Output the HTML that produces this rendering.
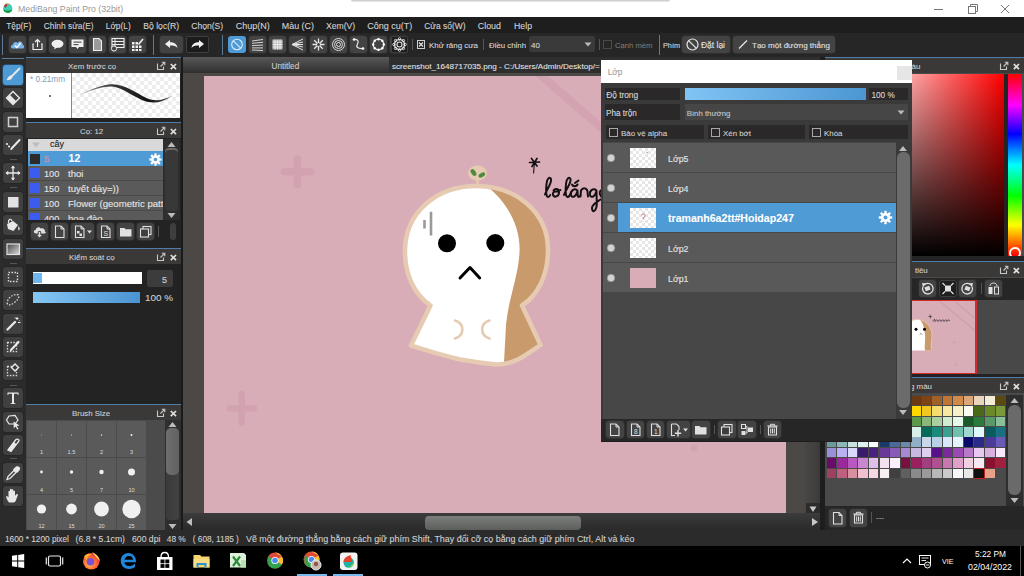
<!DOCTYPE html><html><head><meta charset="utf-8"><style>
*{margin:0;padding:0;box-sizing:border-box}
html,body{width:1024px;height:576px;overflow:hidden;background:#2a2a2a;font-family:"Liberation Sans",sans-serif}
div{position:absolute}
.t{white-space:nowrap;line-height:1;-webkit-text-stroke:0.1px currentColor}
.btn{background:#434343;border-radius:3px;box-shadow:0 0 0 1px #2e2e2e}
</style></head><body>
<div style="left:0px;top:0px;width:1024px;height:17px;background:#ffffff"></div>
<div style="left:351px;top:0px;width:319px;height:2px;background:linear-gradient(#c8c8c8,#eeeeee);border-radius:0 0 3px 3px"></div>
<svg style="position:absolute;left:0;top:0" width="16" height="17" viewBox="0 0 16 17"><circle cx="7.8" cy="8.2" r="4.6" fill="#3ccfb8"/><path d="M3.3 9 A4.6 4.6 0 0 0 12.3 9.5 C10 11 6 11 3.3 9Z" fill="#1a9a3a"/><path d="M4 6.5 C4.5 4 6.5 3.5 8 4 C7 5.5 6.5 7 5.5 8 Z" fill="#c8303a"/><path d="M6.5 3.8 C8 3.2 9 3.6 9.5 4.2 L7.5 5Z" fill="#f0a040"/></svg>
<div class="t" style="left:18px;top:5.00px;font-size:8.75px;color:#999999;-webkit-text-stroke:0">MediBang Paint Pro (32bit)</div>
<svg style="position:absolute;left:930px;top:3px" width="90" height="12" viewBox="0 0 90 12"><line x1="4" y1="6.5" x2="13" y2="6.5" stroke="#777" stroke-width="1"/><rect x="38.5" y="3.5" width="7" height="7" fill="none" stroke="#777"/><path d="M40.5 3.5 V1.5 H47.5 V8.5 H45.5" fill="none" stroke="#777"/><path d="M71 2 L79 10 M79 2 L71 10" stroke="#777" stroke-width="1"/></svg>
<div style="left:0px;top:17px;width:1024px;height:16px;background:#1e1e1e"></div>
<div class="t" style="left:6.25px;top:22.00px;font-size:8.33px;color:#d2d2d2;">Tệp(F)</div>
<div class="t" style="left:43.75px;top:22.00px;font-size:8.4px;color:#d2d2d2;">Chỉnh sửa(E)</div>
<div class="t" style="left:105.75px;top:22.00px;font-size:8.36px;color:#d2d2d2;">Lớp(L)</div>
<div class="t" style="left:143.25px;top:22.00px;font-size:8.64px;color:#d2d2d2;">Bộ lọc(R)</div>
<div class="t" style="left:191.25px;top:22.00px;font-size:8.59px;color:#d2d2d2;">Chọn(S)</div>
<div class="t" style="left:235.75px;top:22.00px;font-size:9.0px;color:#d2d2d2;">Chụp(N)</div>
<div class="t" style="left:281.75px;top:22.00px;font-size:8.93px;color:#d2d2d2;">Màu (C)</div>
<div class="t" style="left:326px;top:22.00px;font-size:8.63px;color:#d2d2d2;">Xem(V)</div>
<div class="t" style="left:367.25px;top:22.00px;font-size:9.0px;color:#d2d2d2;">Công cụ(T)</div>
<div class="t" style="left:424.25px;top:22.00px;font-size:8.43px;color:#d2d2d2;">Cửa sổ(W)</div>
<div class="t" style="left:477.75px;top:22.00px;font-size:8.9px;color:#d2d2d2;">Cloud</div>
<div class="t" style="left:514px;top:22.00px;font-size:8.75px;color:#d2d2d2;">Help</div>
<div style="left:0px;top:33px;width:1024px;height:24px;background:#262626"></div>
<div style="left:2px;top:35px;width:1px;height:20px;background:#5a7a98"></div>
<div class="btn" style="left:9px;top:36px;width:17px;height:17px;"></div>
<div class="btn" style="left:29px;top:36px;width:17px;height:17px;"></div>
<div class="btn" style="left:49px;top:36px;width:17px;height:17px;"></div>
<div class="btn" style="left:69px;top:36px;width:17px;height:17px;"></div>
<div class="btn" style="left:89px;top:36px;width:17px;height:17px;"></div>
<div class="btn" style="left:109px;top:36px;width:17px;height:17px;"></div>
<div class="btn" style="left:129px;top:36px;width:17px;height:17px;"></div>
<svg style="position:absolute;left:9px;top:36px" width="17" height="17" viewBox="0 0 17 17"><path d="M3.5 12.5 C1.5 12.5 1.5 9 3.8 8.8 C4 6 7.5 5 8.8 7 C10 4.5 14 5.5 13.6 8.7 C15.8 9 15.6 12.5 13.5 12.5Z" fill="#78b4ea"/><path d="M5.8 9.6 L7.8 11.4 L11.6 7.2" fill="none" stroke="#fff" stroke-width="1.4"/></svg>
<svg style="position:absolute;left:29px;top:36px" width="17" height="17" viewBox="0 0 17 17"><path d="M5 8 H4 V13.5 H13 V8 H12" fill="none" stroke="#f0f0f0" stroke-width="1.2"/><path d="M8.5 11 V3.5 M6 6 L8.5 3.5 L11 6" fill="none" stroke="#f0f0f0" stroke-width="1.2"/></svg>
<svg style="position:absolute;left:49px;top:36px" width="17" height="17" viewBox="0 0 17 17"><ellipse cx="8.5" cy="7.8" rx="6" ry="4" fill="#f0f0f0"/><path d="M6 10.5 L5 13.5 L9 11Z" fill="#f0f0f0"/></svg>
<svg style="position:absolute;left:69px;top:36px" width="17" height="17" viewBox="0 0 17 17"><path d="M2.5 3.5 H14.5 V11 H10 L8.5 13 L7 11 H2.5Z" fill="#f0f0f0"/><rect x="4.5" y="5.5" width="8" height="1.2" fill="#555"/><rect x="4.5" y="8" width="5" height="1.2" fill="#555"/></svg>
<svg style="position:absolute;left:89px;top:36px" width="17" height="17" viewBox="0 0 17 17"><path d="M4.5 2.5 H10 L12.5 5 V14.5 H4.5Z" fill="#9a9a9a" stroke="#f0f0f0" stroke-width="1.1"/></svg>
<svg style="position:absolute;left:109px;top:36px" width="17" height="17" viewBox="0 0 17 17"><rect x="3" y="2.5" width="12" height="9" fill="none" stroke="#f0f0f0" stroke-width="1.1"/><path d="M3 5.5 H15 M3 8.5 H15 M6 2.5 V11.5" stroke="#f0f0f0" stroke-width="1"/><circle cx="5" cy="12.5" r="2.6" fill="#444" stroke="#f0f0f0" stroke-width="1"/></svg>
<svg style="position:absolute;left:129px;top:36px" width="17" height="17" viewBox="0 0 17 17"><g fill="#f0f0f0"><rect x="3" y="6" width="2.5" height="2.5"/><rect x="6.5" y="6" width="2.5" height="2.5"/><rect x="3" y="9.5" width="2.5" height="2.5"/><rect x="6.5" y="9.5" width="2.5" height="2.5"/><rect x="10" y="9.5" width="2.5" height="2.5"/><rect x="3" y="13" width="2.5" height="2"/><rect x="6.5" y="13" width="2.5" height="2"/><rect x="10" y="13" width="2.5" height="2"/></g><path d="M9.5 8.5 L14 3" stroke="#f0f0f0" stroke-width="1.6"/></svg>
<div style="left:153px;top:35px;width:1px;height:20px;background:#5a7a98"></div>
<div class="btn" style="left:160px;top:36px;width:23px;height:17px;"></div>
<svg style="position:absolute;left:160px;top:36px" width="23" height="17" viewBox="0 0 23 17"><path d="M5 8 L10 4 V6.3 C14 6.3 17 8 17.5 12 C16 10 14 9.6 10 9.6 V12Z" fill="#f0f0f0"/></svg>
<div style="left:186px;top:36px;width:23px;height:17px;background:#1c1c1c;border:1px solid #3e3e3e;border-radius:2px"></div>
<svg style="position:absolute;left:186px;top:36px" width="23" height="17" viewBox="0 0 23 17"><path d="M18 8 L13 4 V6.3 C9 6.3 6 8 5.5 12 C7 10 9 9.6 13 9.6 V12Z" fill="#f0f0f0"/></svg>
<div style="left:222px;top:35px;width:1px;height:20px;background:#5a7a98"></div>
<div style="left:228px;top:36px;width:18px;height:17px;background:#4e9ad4;border-radius:3px"></div>
<svg style="position:absolute;left:228px;top:36px" width="18" height="17" viewBox="0 0 18 17"><circle cx="9" cy="8.5" r="5.3" fill="none" stroke="#d8ecfa" stroke-width="1.1"/><path d="M5.3 4.8 L12.7 12.2" stroke="#d8ecfa" stroke-width="1.1"/></svg>
<div class="btn" style="left:249px;top:36px;width:17px;height:17px;"></div>
<div class="btn" style="left:269px;top:36px;width:17px;height:17px;"></div>
<div class="btn" style="left:289px;top:36px;width:17px;height:17px;"></div>
<div class="btn" style="left:310px;top:36px;width:17px;height:17px;"></div>
<div class="btn" style="left:330px;top:36px;width:17px;height:17px;"></div>
<div class="btn" style="left:350px;top:36px;width:17px;height:17px;"></div>
<div class="btn" style="left:370px;top:36px;width:17px;height:17px;"></div>
<div class="btn" style="left:390px;top:36px;width:17px;height:17px;"></div>
<svg style="position:absolute;left:249px;top:36px" width="17" height="17" viewBox="0 0 17 17"><path d="M3 5 L14 3.5 M3 7.3 L14 6.3 M3 9.6 L14 9.1 M3 11.9 L14 11.9 M3 14 L14 14.5" stroke="#e8e8e8" stroke-width="0.9"/></svg>
<svg style="position:absolute;left:269px;top:36px" width="17" height="17" viewBox="0 0 17 17"><rect x="3.5" y="3.5" width="10" height="10" fill="#bbb"/><path d="M3.5 6 H13.5 M3.5 8.5 H13.5 M3.5 11 H13.5 M6 3.5 V13.5 M8.5 3.5 V13.5 M11 3.5 V13.5" stroke="#eee" stroke-width="0.8"/></svg>
<svg style="position:absolute;left:289px;top:36px" width="17" height="17" viewBox="0 0 17 17"><path d="M14 3 L3 8.5 L14 14 M14 6 L3 8.5 L14 11 M14 8.5 H3" fill="none" stroke="#e8e8e8" stroke-width="1"/></svg>
<svg style="position:absolute;left:310px;top:36px" width="17" height="17" viewBox="0 0 17 17"><path d="M8.5 2.5 V14.5 M2.5 8.5 H14.5 M4.2 4.2 L12.8 12.8 M12.8 4.2 L4.2 12.8" stroke="#e8e8e8" stroke-width="1.3"/><circle cx="8.5" cy="8.5" r="1.5" fill="#3e3e3e"/></svg>
<svg style="position:absolute;left:330px;top:36px" width="17" height="17" viewBox="0 0 17 17"><g fill="none" stroke="#e8e8e8" stroke-width="0.9"><circle cx="8.5" cy="8.5" r="6"/><circle cx="8.5" cy="8.5" r="4"/><circle cx="8.5" cy="8.5" r="2"/></g></svg>
<svg style="position:absolute;left:350px;top:36px" width="17" height="17" viewBox="0 0 17 17"><path d="M4 3.5 C7 3 9.5 5 7.5 8 C5.5 11 8 13 13 12.5" fill="none" stroke="#e8e8e8" stroke-width="1.2"/><circle cx="4" cy="3.5" r="1.3" fill="#fff"/><circle cx="13" cy="12.5" r="1.3" fill="#fff"/></svg>
<svg style="position:absolute;left:370px;top:36px" width="17" height="17" viewBox="0 0 17 17"><circle cx="8.5" cy="8.5" r="5.3" fill="none" stroke="#e8e8e8" stroke-width="1.3"/><circle cx="13.80" cy="8.50" r="1.2" fill="#fff"/><circle cx="12.25" cy="12.25" r="1.2" fill="#fff"/><circle cx="8.50" cy="13.80" r="1.2" fill="#fff"/><circle cx="4.75" cy="12.25" r="1.2" fill="#fff"/><circle cx="3.20" cy="8.50" r="1.2" fill="#fff"/><circle cx="4.75" cy="4.75" r="1.2" fill="#fff"/><circle cx="8.50" cy="3.20" r="1.2" fill="#fff"/><circle cx="12.25" cy="4.75" r="1.2" fill="#fff"/></svg>
<div style="left:391px;top:36px;width:17px;height:17px;background:#1c1c1c;border:1px solid #3e3e3e;border-radius:2px"></div>
<svg style="position:absolute;left:391px;top:36px" width="17" height="17" viewBox="0 0 17 17"><circle cx="8.5" cy="8.5" r="5" fill="none" stroke="#e8e8e8" stroke-width="1.1"/><circle cx="8.5" cy="8.5" r="2.5" fill="none" stroke="#e8e8e8" stroke-width="1.1"/><circle cx="14.00" cy="8.50" r="1.3" fill="none" stroke="#e8e8e8" stroke-width="0.9"/><circle cx="12.39" cy="12.39" r="1.3" fill="none" stroke="#e8e8e8" stroke-width="0.9"/><circle cx="8.50" cy="14.00" r="1.3" fill="none" stroke="#e8e8e8" stroke-width="0.9"/><circle cx="4.61" cy="12.39" r="1.3" fill="none" stroke="#e8e8e8" stroke-width="0.9"/><circle cx="3.00" cy="8.50" r="1.3" fill="none" stroke="#e8e8e8" stroke-width="0.9"/><circle cx="4.61" cy="4.61" r="1.3" fill="none" stroke="#e8e8e8" stroke-width="0.9"/><circle cx="8.50" cy="3.00" r="1.3" fill="none" stroke="#e8e8e8" stroke-width="0.9"/><circle cx="12.39" cy="4.61" r="1.3" fill="none" stroke="#e8e8e8" stroke-width="0.9"/></svg>
<div style="left:412px;top:39px;width:1px;height:11px;background:#555"></div>
<div style="left:417px;top:40px;width:8px;height:9px;border:1px solid #cfcfcf"></div>
<svg style="position:absolute;left:417px;top:40px" width="8" height="9" viewBox="0 0 8 9"><path d="M2 2.5 L6 6.5 M6 2.5 L2 6.5" stroke="#e0e0e0" stroke-width="1.2"/></svg>
<div class="t" style="left:429px;top:42.00px;font-size:7.94px;color:#d8d8d8;">Khử răng cưa</div>
<div style="left:483px;top:39px;width:1px;height:11px;background:#555"></div>
<div class="t" style="left:489px;top:42.00px;font-size:7.83px;color:#d8d8d8;">Điều chỉnh</div>
<div style="left:529px;top:36px;width:66px;height:16px;background:#3a3a3a;border-radius:2px"></div>
<div class="t" style="left:531px;top:42.00px;font-size:8px;color:#d8d8d8;">40</div>
<svg style="position:absolute;left:584px;top:42px" width="8" height="5" viewBox="0 0 8 5"><path d="M0.5 0.5 L7.5 0.5 L4 4.5Z" fill="#bbb"/></svg>
<div style="left:599px;top:39px;width:1px;height:11px;background:#555"></div>
<div style="left:603px;top:40px;width:9px;height:9px;border:1px solid #4a4a4a"></div>
<div class="t" style="left:615px;top:42.00px;font-size:7.67px;color:#777777;">Cạnh mềm</div>
<div style="left:659px;top:35px;width:1px;height:20px;background:#5a7a98"></div>
<div class="t" style="left:663px;top:42.00px;font-size:7.28px;color:#d8d8d8;">Phím</div>
<div class="btn" style="left:682px;top:36px;width:48px;height:17px;"></div>
<svg style="position:absolute;left:685px;top:37px" width="15" height="15" viewBox="0 0 15 15"><circle cx="7.5" cy="7.5" r="5.5" fill="none" stroke="#e8e8e8" stroke-width="1.2"/><path d="M3.6 3.6 L11.4 11.4" stroke="#e8e8e8" stroke-width="1.2"/></svg>
<div class="t" style="left:701px;top:41.00px;font-size:8.47px;color:#e0e0e0;">Đặt lại</div>
<div class="btn" style="left:733px;top:36px;width:102px;height:17px;"></div>
<svg style="position:absolute;left:737px;top:38px" width="12" height="12" viewBox="0 0 12 12"><path d="M2 10.5 L10 2.5" stroke="#e8e8e8" stroke-width="1.3"/></svg>
<div class="t" style="left:752px;top:42.00px;font-size:8.03px;color:#e0e0e0;">Tạo một đường thẳng</div>
<div style="left:0px;top:57px;width:26px;height:474px;background:#2b2b2b"></div>
<div style="left:2px;top:58px;width:22px;height:1px;background:#5a7a98"></div>
<div style="left:10px;top:159px;width:7px;height:1px;background:#555"></div>
<div style="left:10px;top:187px;width:7px;height:1px;background:#555"></div>
<div style="left:10px;top:263px;width:7px;height:1px;background:#555"></div>
<div style="left:10px;top:385px;width:7px;height:1px;background:#555"></div>
<div style="left:10px;top:458px;width:7px;height:1px;background:#555"></div>
<div style="left:3px;top:65px;width:20px;height:20px;background:#4e9ad4;border-radius:3px;box-shadow:0 0 0 1px #2a4a6a"></div>
<svg style="position:absolute;left:3px;top:65px" width="20" height="20" viewBox="0 0 20 20"><path d="M16.5 3.5 L8.5 11.5" stroke="#e8e8e8" stroke-width="1.8" stroke-linecap="round"/><path d="M8 10.5 C5.5 10.5 5 13 3.5 15 C6 15.5 9.5 14.5 9.5 12Z" fill="#e8e8e8"/></svg>
<div style="left:3px;top:88px;width:20px;height:20px;background:#404040;border-radius:3px;box-shadow:0 0 0 1px #262626"></div>
<svg style="position:absolute;left:3px;top:88px" width="20" height="20" viewBox="0 0 20 20"><path d="M10 3.5 L16.5 10 L10 16.5 L3.5 10Z" fill="none" stroke="#e8e8e8" stroke-width="1.4"/><path d="M6.75 6.75 L13.25 13.25 L10 16.5 L3.5 10Z" fill="#e8e8e8"/></svg>
<div style="left:3px;top:112px;width:20px;height:20px;background:#404040;border-radius:3px;box-shadow:0 0 0 1px #262626"></div>
<svg style="position:absolute;left:3px;top:112px" width="20" height="20" viewBox="0 0 20 20"><rect x="5.5" y="5.5" width="9" height="9" fill="none" stroke="#d0d0d0" stroke-width="1.5"/></svg>
<div style="left:3px;top:135px;width:20px;height:20px;background:#404040;border-radius:3px;box-shadow:0 0 0 1px #262626"></div>
<svg style="position:absolute;left:3px;top:135px" width="20" height="20" viewBox="0 0 20 20"><path d="M9 13 L16.5 5" stroke="#e8e8e8" stroke-width="2" stroke-linecap="round"/><circle cx="4" cy="9" r="1.1" fill="#e8e8e8"/><circle cx="6" cy="11.5" r="1.1" fill="#e8e8e8"/><circle cx="8.3" cy="14" r="1.1" fill="#e8e8e8"/></svg>
<div style="left:3px;top:163px;width:20px;height:20px;background:#404040;border-radius:3px;box-shadow:0 0 0 1px #262626"></div>
<svg style="position:absolute;left:3px;top:163px" width="20" height="20" viewBox="0 0 20 20"><path d="M10 3 V17 M3 10 H17" stroke="#e8e8e8" stroke-width="1.3"/><path d="M10 2.5 L7.8 5.2 H12.2Z M10 17.5 L7.8 14.8 H12.2Z M2.5 10 L5.2 7.8 V12.2Z M17.5 10 L14.8 7.8 V12.2Z" fill="#e8e8e8"/></svg>
<div style="left:3px;top:192px;width:20px;height:20px;background:#404040;border-radius:3px;box-shadow:0 0 0 1px #262626"></div>
<svg style="position:absolute;left:3px;top:192px" width="20" height="20" viewBox="0 0 20 20"><rect x="5" y="5" width="10.5" height="10.5" fill="#e2e2e2"/></svg>
<div style="left:3px;top:215px;width:20px;height:20px;background:#404040;border-radius:3px;box-shadow:0 0 0 1px #262626"></div>
<svg style="position:absolute;left:3px;top:215px" width="20" height="20" viewBox="0 0 20 20"><path d="M4 9 L10 6 L15 10 L10.5 16 L5 14Z" fill="#e8e8e8"/><path d="M5.5 8 C5 4 8 3 9 6" fill="none" stroke="#e8e8e8" stroke-width="1.2"/><path d="M15.5 11 C17 13 17 15 16 15.5 C15 15 15 13 15.5 11Z" fill="#e8e8e8"/></svg>
<div style="left:3px;top:239px;width:20px;height:20px;background:#404040;border-radius:3px;box-shadow:0 0 0 1px #262626"></div>
<svg style="position:absolute;left:3px;top:239px" width="20" height="20" viewBox="0 0 20 20"><defs><linearGradient id="gg" x1="0" y1="0" x2="1" y2="1"><stop offset="0" stop-color="#444"/><stop offset="1" stop-color="#ddd"/></linearGradient></defs><rect x="4" y="5" width="12.5" height="10.5" fill="url(#gg)" stroke="#e0e0e0" stroke-width="1.2"/></svg>
<div style="left:3px;top:267px;width:20px;height:20px;background:#404040;border-radius:3px;box-shadow:0 0 0 1px #262626"></div>
<svg style="position:absolute;left:3px;top:267px" width="20" height="20" viewBox="0 0 20 20"><rect x="5.5" y="5.5" width="9" height="9" fill="none" stroke="#d8d8d8" stroke-width="1.4" stroke-dasharray="1.6 1.4"/></svg>
<div style="left:3px;top:290px;width:20px;height:20px;background:#404040;border-radius:3px;box-shadow:0 0 0 1px #262626"></div>
<svg style="position:absolute;left:3px;top:290px" width="20" height="20" viewBox="0 0 20 20"><path d="M4.5 14 C3 10 9 4 14 4.5 C17 5 16 9 12 12 C9 14.5 6 16 4.5 14Z" fill="none" stroke="#d8d8d8" stroke-width="1.3" stroke-dasharray="1.5 1.5"/></svg>
<div style="left:3px;top:314px;width:20px;height:20px;background:#404040;border-radius:3px;box-shadow:0 0 0 1px #262626"></div>
<svg style="position:absolute;left:3px;top:314px" width="20" height="20" viewBox="0 0 20 20"><path d="M4.5 15.5 L12 8" stroke="#e8e8e8" stroke-width="2.4" stroke-linecap="round"/><path d="M14 3 V6 M12.5 4.5 H15.5 M16.5 6.5 L17 7 M11.5 3 L12 3.5 M15 8.5 H17.5" stroke="#e8e8e8" stroke-width="1"/></svg>
<div style="left:3px;top:337px;width:20px;height:20px;background:#404040;border-radius:3px;box-shadow:0 0 0 1px #262626"></div>
<svg style="position:absolute;left:3px;top:337px" width="20" height="20" viewBox="0 0 20 20"><rect x="4.5" y="5.5" width="9" height="9" fill="none" stroke="#d8d8d8" stroke-width="1.3" stroke-dasharray="1.5 1.4"/><path d="M8 13 L15.5 5" stroke="#e8e8e8" stroke-width="2.2" stroke-linecap="round"/></svg>
<div style="left:3px;top:360px;width:20px;height:20px;background:#404040;border-radius:3px;box-shadow:0 0 0 1px #262626"></div>
<svg style="position:absolute;left:3px;top:360px" width="20" height="20" viewBox="0 0 20 20"><rect x="4.5" y="6.5" width="9" height="9" fill="none" stroke="#d8d8d8" stroke-width="1.3" stroke-dasharray="1.5 1.4"/><path d="M12 3 L16.5 7.5 L12 12 L7.5 7.5Z" fill="#e8e8e8"/><path d="M12 5 L14.5 7.5 L12 10 L9.5 7.5Z" fill="#3a3a3a"/></svg>
<div style="left:3px;top:388px;width:20px;height:20px;background:#404040;border-radius:3px;box-shadow:0 0 0 1px #262626"></div>
<svg style="position:absolute;left:3px;top:388px" width="20" height="20" viewBox="0 0 20 20"><path d="M4.5 4.5 H15.5 V7 H14.8 L14.5 5.8 H11 V15 L12.5 15.5 V16 H7.5 V15.5 L9 15 V5.8 H5.5 L5.2 7 H4.5Z" fill="#e8e8e8"/></svg>
<div style="left:3px;top:412px;width:20px;height:20px;background:#404040;border-radius:3px;box-shadow:0 0 0 1px #262626"></div>
<svg style="position:absolute;left:3px;top:412px" width="20" height="20" viewBox="0 0 20 20"><path d="M6 4 L12 3.5 L15 8 L12 12 L6 12 L3.5 8Z" fill="none" stroke="#e8e8e8" stroke-width="1.2"/><path d="M10.5 9.5 L16.5 13.5 L13.8 14 L15.5 17 L14.3 17.6 L12.6 14.6 L10.8 16.3Z" fill="#e8e8e8"/></svg>
<div style="left:3px;top:435px;width:20px;height:20px;background:#404040;border-radius:3px;box-shadow:0 0 0 1px #262626"></div>
<svg style="position:absolute;left:3px;top:435px" width="20" height="20" viewBox="0 0 20 20"><path d="M5 15 L13 4.5 C14 3.5 16.5 4.5 16 6 L8 16.5Z" fill="none" stroke="#e8e8e8" stroke-width="1.3"/><path d="M5 15 L11 7 L13.5 9.2 L8 16.5Z" fill="#e8e8e8"/></svg>
<div style="left:3px;top:463px;width:20px;height:20px;background:#404040;border-radius:3px;box-shadow:0 0 0 1px #262626"></div>
<svg style="position:absolute;left:3px;top:463px" width="20" height="20" viewBox="0 0 20 20"><path d="M4 16.5 L5 13.5 L11 7.5 L13 9.5 L7 15.5Z" fill="none" stroke="#e8e8e8" stroke-width="1.3"/><path d="M10 6.5 L12 4.5 C13 3 15.5 3 16.5 4 C17.5 5 17.2 7 16 8 L14 10Z" fill="#e8e8e8"/></svg>
<div style="left:3px;top:486px;width:20px;height:20px;background:#404040;border-radius:3px;box-shadow:0 0 0 1px #262626"></div>
<svg style="position:absolute;left:3px;top:486px" width="20" height="20" viewBox="0 0 20 20"><path d="M6 16.5 C4.5 14.5 3 12 3.2 10.5 C3.5 9.5 4.5 10 5.5 11.5 V5.5 C5.5 4.5 7 4.5 7 5.5 V9.5 V3.5 C7 2.5 8.7 2.5 8.7 3.5 V9.5 V4 C8.7 3 10.4 3 10.4 4 V9.5 V5.5 C10.4 4.5 12 4.5 12 5.5 V10 L13 8.5 C13.8 7.5 15.2 8 14.8 9.2 L13 14 C12.3 15.8 11.8 16.5 10.5 16.5Z" fill="#e8e8e8"/></svg>
<div style="left:26px;top:57px;width:155px;height:474px;background:#232323"></div>
<div style="left:26px;top:57px;width:155px;height:1px;background:#4f7ca8"></div>
<div style="left:26px;top:58px;width:155px;height:15px;background:#3a3938"></div>
<div class="t" style="left:68px;top:63.00px;font-size:7.9px;color:#cfcfcf;">Xem trước cọ</div>
<svg style="position:absolute;left:156px;top:61px" width="22" height="10" viewBox="0 0 22 10"><path d="M1.5 2.5 V8.5 H7.5 V5.5" fill="none" stroke="#c8c8c8" stroke-width="1.1"/><path d="M4.5 5.5 L8 2 M5.8 1.2 H8.8 V4.2" fill="none" stroke="#c8c8c8" stroke-width="1.1"/><path d="M14.8 3 L20 8.2 M20 3 L14.8 8.2" stroke="#e0e0e0" stroke-width="1.7"/></svg>
<div style="left:26px;top:73px;width:46px;height:45px;background:#ffffff"></div>
<div class="t" style="left:30px;top:76.00px;font-size:8.18px;color:#7d9ec0;-webkit-text-stroke:0">* 0.21mm</div>
<div style="left:48.5px;top:94.5px;width:2px;height:2px;background:#444;border-radius:1px"></div>
<div style="left:71px;top:73px;width:1px;height:45px;background:#888"></div>
<div style="left:72px;top:73px;width:108px;height:45px;background-color:#fff;background-image:linear-gradient(45deg,#ededed 25%,transparent 25%,transparent 75%,#ededed 75%),linear-gradient(45deg,#ededed 25%,transparent 25%,transparent 75%,#ededed 75%);background-size:8px 8px;background-position:0 0,4px 4px"></div>
<svg style="position:absolute;left:0;top:0" width="1024" height="576" viewBox="0 0 1024 576" pointer-events="none"><defs><linearGradient id="bsg" gradientUnits="userSpaceOnUse" x1="79" y1="0" x2="172" y2="0"><stop offset="0" stop-color="#9a9a9a"/><stop offset="0.35" stop-color="#3a3a3a"/><stop offset="0.75" stop-color="#111"/><stop offset="1" stop-color="#555"/></linearGradient></defs><path d="M79.5 95 C92 89 102 84.5 112 84.3 C124 84 136 93 147 98.3 C156 102 163 100 172 96 C164 101.5 156 104 147 101.8 C135 98.5 123 87.5 112 86.6 C102 86.2 92 90 79.5 95Z" fill="url(#bsg)"/></svg>
<div style="left:26px;top:122px;width:155px;height:1px;background:#4f7ca8"></div>
<div style="left:26px;top:123px;width:155px;height:15px;background:#3a3938"></div>
<div class="t" style="left:80px;top:128.00px;font-size:7.9px;color:#cfcfcf;">Cọ: 12</div>
<svg style="position:absolute;left:156px;top:126px" width="22" height="10" viewBox="0 0 22 10"><path d="M1.5 2.5 V8.5 H7.5 V5.5" fill="none" stroke="#c8c8c8" stroke-width="1.1"/><path d="M4.5 5.5 L8 2 M5.8 1.2 H8.8 V4.2" fill="none" stroke="#c8c8c8" stroke-width="1.1"/><path d="M14.8 3 L20 8.2 M20 3 L14.8 8.2" stroke="#e0e0e0" stroke-width="1.7"/></svg>
<div style="left:28px;top:139px;width:135px;height:81px;background:#4a4a4a"></div>
<div style="left:28px;top:139px;width:135px;height:12px;background:#d9d9d9"></div>
<div class="t" style="left:50px;top:140.00px;font-size:9px;color:#222;">cây</div>
<div style="left:28px;top:151px;width:135px;height:15px;background:#4f9bd6"></div>
<div style="left:30px;top:154px;width:10px;height:10px;background:#2b2b2b"></div>
<div class="t" style="left:44px;top:154.00px;font-size:9.4px;color:#e58aa0;">5</div>
<div class="t" style="left:68.6px;top:154.00px;font-size:10.43px;color:#ffffff;;font-weight:bold">12</div>
<svg style="position:absolute;left:148px;top:152px" width="15" height="15" viewBox="0 0 15 15"><g fill="#fff"><circle cx="7.5" cy="7.5" r="4.3"/><rect x="6.4" y="1.3" width="2.2" height="3.2" transform="rotate(0 7.5 7.5)"/><rect x="6.4" y="1.3" width="2.2" height="3.2" transform="rotate(45 7.5 7.5)"/><rect x="6.4" y="1.3" width="2.2" height="3.2" transform="rotate(90 7.5 7.5)"/><rect x="6.4" y="1.3" width="2.2" height="3.2" transform="rotate(135 7.5 7.5)"/><rect x="6.4" y="1.3" width="2.2" height="3.2" transform="rotate(180 7.5 7.5)"/><rect x="6.4" y="1.3" width="2.2" height="3.2" transform="rotate(225 7.5 7.5)"/><rect x="6.4" y="1.3" width="2.2" height="3.2" transform="rotate(270 7.5 7.5)"/><rect x="6.4" y="1.3" width="2.2" height="3.2" transform="rotate(315 7.5 7.5)"/></g><circle cx="7.5" cy="7.5" r="1.8" fill="#4f9bd6"/></svg>
<div style="left:28px;top:166px;width:135px;height:14px;background:#5a5a5a"></div>
<div style="left:30px;top:168px;width:10px;height:10px;background:#3c5cf0"></div>
<div class="t" style="left:44px;top:170.00px;font-size:9.2px;color:#e6e6e6;">100</div>
<div class="t" style="left:68px;top:169.00px;font-size:9.6px;color:#e6e6e6;">thoi</div>
<div style="left:28px;top:181px;width:135px;height:14px;background:#5a5a5a"></div>
<div style="left:30px;top:183px;width:10px;height:10px;background:#3c5cf0"></div>
<div class="t" style="left:44px;top:185.00px;font-size:9.2px;color:#e6e6e6;">150</div>
<div class="t" style="left:68px;top:184.00px;font-size:9.6px;color:#e6e6e6;">tuyết dày=))</div>
<div style="left:28px;top:196px;width:135px;height:14px;background:#5a5a5a"></div>
<div style="left:30px;top:198px;width:10px;height:10px;background:#3c5cf0"></div>
<div class="t" style="left:44px;top:200.00px;font-size:9.2px;color:#e6e6e6;">100</div>
<div class="t" style="left:68px;top:199.00px;font-size:9.6px;color:#e6e6e6;">Flower (geometric patt</div>
<div style="left:28px;top:211px;width:135px;height:14px;background:#5a5a5a"></div>
<div style="left:30px;top:213px;width:10px;height:10px;background:#3c5cf0"></div>
<div class="t" style="left:44px;top:215.00px;font-size:9.2px;color:#e6e6e6;">400</div>
<div class="t" style="left:68px;top:214.00px;font-size:9.6px;color:#e6e6e6;">hoa đào</div>
<div style="left:163px;top:139px;width:17px;height:81px;background:#2e2e2e"></div>
<svg style="position:absolute;left:166px;top:141px" width="11" height="7" viewBox="0 0 11 7"><path d="M1.5 6 L5.5 1 L9.5 6Z" fill="#bbb"/></svg>
<div style="left:165px;top:148px;width:13px;height:63px;background:#383838;border-radius:4px;box-shadow:inset 0 2px 0 #6a6a6a"></div>
<svg style="position:absolute;left:166px;top:212px" width="11" height="7" viewBox="0 0 11 7"><path d="M1.5 1 L5.5 6 L9.5 1Z" fill="#bbb"/></svg>
<svg style="position:absolute;left:31px;top:141px" width="10" height="8" viewBox="0 0 10 8"><path d="M1 1.5 H9 L5 6.5Z" fill="#bdbdbd"/></svg>
<div style="left:28px;top:220px;width:152px;height:24px;background:#232323"></div>
<div style="left:31px;top:223px;width:17px;height:17px;background:#434343;border-radius:3px;box-shadow:0 0 0 1px #2e2e2e"></div>
<svg style="position:absolute;left:31px;top:223px" width="17" height="17" viewBox="0 0 17 17"><path d="M4.8 10.5 C2.3 10.5 2.3 7 4.8 6.8 C5 4.2 8.3 3.3 9.5 5.5 C12 4.5 14.5 6.3 13.8 8.6 C15.3 8.9 15 10.5 13.6 10.5Z" fill="#e0e0e0"/><path d="M7.3 8.5 H9.7 V11.5 H11.8 L8.5 15 L5.2 11.5 H7.3Z" fill="#e0e0e0" stroke="#434343" stroke-width="0.9"/></svg>
<div style="left:51px;top:223px;width:17px;height:17px;background:#434343;border-radius:3px;box-shadow:0 0 0 1px #2e2e2e"></div>
<svg style="position:absolute;left:51px;top:223px" width="17" height="17" viewBox="0 0 17 17"><g transform="translate(0 0)"><path d="M4.5 3 H10 L13 6 V14.5 H4.5Z" fill="none" stroke="#e0e0e0" stroke-width="1.1"/><path d="M10 3 V6 H13" fill="none" stroke="#e0e0e0" stroke-width="1"/></g></svg>
<div style="left:71px;top:223px;width:23px;height:17px;background:#434343;border-radius:3px;box-shadow:0 0 0 1px #2e2e2e"></div>
<svg style="position:absolute;left:71px;top:223px" width="23" height="17" viewBox="0 0 23 17"><g transform="translate(0 0)"><path d="M4.5 3 H10 L13 6 V14.5 H4.5Z" fill="none" stroke="#e0e0e0" stroke-width="1.1"/><path d="M10 3 V6 H13" fill="none" stroke="#e0e0e0" stroke-width="1"/><rect x="6" y="8" width="2.5" height="2.5" fill="#e0e0e0"/><rect x="8.5" y="10.5" width="2.5" height="2.5" fill="#e0e0e0"/></g><path d="M16 7.5 H21 L18.5 10.5Z" fill="#e0e0e0"/></svg>
<div style="left:97px;top:223px;width:17px;height:17px;background:#434343;border-radius:3px;box-shadow:0 0 0 1px #2e2e2e"></div>
<svg style="position:absolute;left:97px;top:223px" width="17" height="17" viewBox="0 0 17 17"><g transform="translate(0 0)"><path d="M4.5 3 H10 L13 6 V14.5 H4.5Z" fill="none" stroke="#e0e0e0" stroke-width="1.1"/><path d="M10 3 V6 H13" fill="none" stroke="#e0e0e0" stroke-width="1"/><text x="8.8" y="12.8" font-size="7" font-family="Liberation Sans" fill="#e0e0e0" text-anchor="middle">S</text></g></svg>
<div style="left:117px;top:223px;width:17px;height:17px;background:#434343;border-radius:3px;box-shadow:0 0 0 1px #2e2e2e"></div>
<svg style="position:absolute;left:117px;top:223px" width="17" height="17" viewBox="0 0 17 17"><path d="M3 5 H7.5 L8.5 6.2 H14.5 V13.5 H3Z" fill="#e0e0e0"/></svg>
<div style="left:137px;top:223px;width:17px;height:17px;background:#434343;border-radius:3px;box-shadow:0 0 0 1px #2e2e2e"></div>
<svg style="position:absolute;left:137px;top:223px" width="17" height="17" viewBox="0 0 17 17"><rect x="6" y="3.5" width="8" height="8" fill="none" stroke="#e0e0e0" stroke-width="1.1"/><rect x="3.5" y="6" width="8" height="8" fill="#3e3e3e" stroke="#e0e0e0" stroke-width="1.1"/></svg>
<div style="left:158px;top:226px;width:1px;height:11px;background:#555"></div>
<div style="left:170px;top:223px;width:6px;height:17px;background:#3e3e3e;border-radius:3px"></div>
<div style="left:26px;top:248px;width:155px;height:1px;background:#4f7ca8"></div>
<div style="left:26px;top:249px;width:155px;height:15px;background:#3a3938"></div>
<div class="t" style="left:69px;top:254.00px;font-size:7.9px;color:#cfcfcf;">Kiểm soát cọ</div>
<svg style="position:absolute;left:156px;top:252px" width="22" height="10" viewBox="0 0 22 10"><path d="M1.5 2.5 V8.5 H7.5 V5.5" fill="none" stroke="#c8c8c8" stroke-width="1.1"/><path d="M4.5 5.5 L8 2 M5.8 1.2 H8.8 V4.2" fill="none" stroke="#c8c8c8" stroke-width="1.1"/><path d="M14.8 3 L20 8.2 M20 3 L14.8 8.2" stroke="#e0e0e0" stroke-width="1.7"/></svg>
<div style="left:33px;top:272px;width:109px;height:12px;background:#ffffff"></div>
<div style="left:33px;top:273px;width:9px;height:10px;background:#6fb6ee"></div>
<div style="left:147px;top:270px;width:26px;height:17px;background:#3c3c3c;border-radius:2px"></div>
<div class="t" style="left:162px;top:276.00px;font-size:9px;color:#d0d0d0;">5</div>
<div style="left:33px;top:292px;width:107px;height:11px;background:linear-gradient(90deg,#86c6f4,#4a94d2)"></div>
<div class="t" style="left:145px;top:293.00px;font-size:9.88px;color:#d0d0d0;">100 %</div>
<div style="left:26px;top:404px;width:155px;height:1px;background:#4f7ca8"></div>
<div style="left:26px;top:405px;width:155px;height:15px;background:#3a3938"></div>
<div class="t" style="left:72px;top:410.00px;font-size:7.9px;color:#cfcfcf;">Brush Size</div>
<svg style="position:absolute;left:156px;top:408px" width="22" height="10" viewBox="0 0 22 10"><path d="M1.5 2.5 V8.5 H7.5 V5.5" fill="none" stroke="#c8c8c8" stroke-width="1.1"/><path d="M4.5 5.5 L8 2 M5.8 1.2 H8.8 V4.2" fill="none" stroke="#c8c8c8" stroke-width="1.1"/><path d="M14.8 3 L20 8.2 M20 3 L14.8 8.2" stroke="#e0e0e0" stroke-width="1.7"/></svg>
<div style="left:26px;top:420px;width:139px;height:111px;background:#4b4b4b"></div>
<div style="left:27px;top:421px;width:29px;height:36px;background:#5a5a5a"></div>
<svg style="position:absolute;left:27px;top:421px" width="29" height="36" viewBox="0 0 29 36"><circle cx="14.5" cy="14" r="0.4" fill="#f0f0f0"/></svg>
<div class="t" style="left:27px;top:450.00px;font-size:5.6px;color:#dcdcdc;width:29px;text-align:center;-webkit-text-stroke:0">1</div>
<div style="left:57px;top:421px;width:29px;height:36px;background:#5a5a5a"></div>
<svg style="position:absolute;left:57px;top:421px" width="29" height="36" viewBox="0 0 29 36"><circle cx="14.5" cy="14" r="0.5" fill="#f0f0f0"/></svg>
<div class="t" style="left:57px;top:450.00px;font-size:5.6px;color:#dcdcdc;width:29px;text-align:center;-webkit-text-stroke:0">1.5</div>
<div style="left:87px;top:421px;width:29px;height:36px;background:#5a5a5a"></div>
<svg style="position:absolute;left:87px;top:421px" width="29" height="36" viewBox="0 0 29 36"><circle cx="14.5" cy="14" r="0.7" fill="#f0f0f0"/></svg>
<div class="t" style="left:87px;top:450.00px;font-size:5.6px;color:#dcdcdc;width:29px;text-align:center;-webkit-text-stroke:0">2</div>
<div style="left:117px;top:421px;width:29px;height:36px;background:#5a5a5a"></div>
<svg style="position:absolute;left:117px;top:421px" width="29" height="36" viewBox="0 0 29 36"><circle cx="14.5" cy="14" r="1.0" fill="#f0f0f0"/></svg>
<div class="t" style="left:117px;top:450.00px;font-size:5.6px;color:#dcdcdc;width:29px;text-align:center;-webkit-text-stroke:0">3</div>
<div style="left:27px;top:458px;width:29px;height:36px;background:#5a5a5a"></div>
<svg style="position:absolute;left:27px;top:458px" width="29" height="36" viewBox="0 0 29 36"><circle cx="14.5" cy="14" r="1.4" fill="#f0f0f0"/></svg>
<div class="t" style="left:27px;top:488.00px;font-size:5.6px;color:#dcdcdc;width:29px;text-align:center;-webkit-text-stroke:0">4</div>
<div style="left:57px;top:458px;width:29px;height:36px;background:#5a5a5a"></div>
<svg style="position:absolute;left:57px;top:458px" width="29" height="36" viewBox="0 0 29 36"><circle cx="14.5" cy="14" r="1.7" fill="#f0f0f0"/></svg>
<div class="t" style="left:57px;top:488.00px;font-size:5.6px;color:#dcdcdc;width:29px;text-align:center;-webkit-text-stroke:0">5</div>
<div style="left:87px;top:458px;width:29px;height:36px;background:#5a5a5a"></div>
<svg style="position:absolute;left:87px;top:458px" width="29" height="36" viewBox="0 0 29 36"><circle cx="14.5" cy="14" r="2.2" fill="#f0f0f0"/></svg>
<div class="t" style="left:87px;top:488.00px;font-size:5.6px;color:#dcdcdc;width:29px;text-align:center;-webkit-text-stroke:0">7</div>
<div style="left:117px;top:458px;width:29px;height:36px;background:#5a5a5a"></div>
<svg style="position:absolute;left:117px;top:458px" width="29" height="36" viewBox="0 0 29 36"><circle cx="14.5" cy="14" r="3.5" fill="#f0f0f0"/></svg>
<div class="t" style="left:117px;top:488.00px;font-size:5.6px;color:#dcdcdc;width:29px;text-align:center;-webkit-text-stroke:0">10</div>
<div style="left:27px;top:495px;width:29px;height:36px;background:#5a5a5a"></div>
<svg style="position:absolute;left:27px;top:495px" width="29" height="36" viewBox="0 0 29 36"><circle cx="14.5" cy="14" r="4.6" fill="#f0f0f0"/></svg>
<div class="t" style="left:27px;top:524.00px;font-size:5.6px;color:#dcdcdc;width:29px;text-align:center;-webkit-text-stroke:0">12</div>
<div style="left:57px;top:495px;width:29px;height:36px;background:#5a5a5a"></div>
<svg style="position:absolute;left:57px;top:495px" width="29" height="36" viewBox="0 0 29 36"><circle cx="14.5" cy="14" r="5.4" fill="#f0f0f0"/></svg>
<div class="t" style="left:57px;top:524.00px;font-size:5.6px;color:#dcdcdc;width:29px;text-align:center;-webkit-text-stroke:0">15</div>
<div style="left:87px;top:495px;width:29px;height:36px;background:#5a5a5a"></div>
<svg style="position:absolute;left:87px;top:495px" width="29" height="36" viewBox="0 0 29 36"><circle cx="14.5" cy="14" r="7.4" fill="#f0f0f0"/></svg>
<div class="t" style="left:87px;top:524.00px;font-size:5.6px;color:#dcdcdc;width:29px;text-align:center;-webkit-text-stroke:0">20</div>
<div style="left:117px;top:495px;width:29px;height:36px;background:#5a5a5a"></div>
<svg style="position:absolute;left:117px;top:495px" width="29" height="36" viewBox="0 0 29 36"><circle cx="14.5" cy="14" r="9.2" fill="#f0f0f0"/></svg>
<div class="t" style="left:117px;top:524.00px;font-size:5.6px;color:#dcdcdc;width:29px;text-align:center;-webkit-text-stroke:0">25</div>
<div style="left:165px;top:420px;width:16px;height:111px;background:#2e2e2e"></div>
<div style="left:166px;top:428px;width:13px;height:92px;background:linear-gradient(90deg,#3a3a3a,#424242);border-radius:4px"></div>
<div style="left:166px;top:428px;width:13px;height:47px;background:linear-gradient(90deg,#6e6e6e,#626262);border-radius:5px"></div>
<svg style="position:absolute;left:167px;top:421px" width="11" height="7" viewBox="0 0 11 7"><path d="M1.5 6 L5.5 1 L9.5 6Z" fill="#bbb"/></svg>
<svg style="position:absolute;left:167px;top:523px" width="11" height="7" viewBox="0 0 11 7"><path d="M1.5 1 L5.5 6 L9.5 1Z" fill="#bbb"/></svg>
<div style="left:181px;top:57px;width:2px;height:474px;background:#1a1a1a"></div>
<div style="left:183px;top:57px;width:637px;height:17px;background:#2e2e2e"></div>
<div style="left:183px;top:57px;width:206px;height:16px;background:linear-gradient(#585858,#2f2f2f)"></div>
<div class="t" style="left:271.5px;top:63.00px;font-size:8.18px;color:#cfcfcf;">Untitled</div>
<div class="t" style="left:392px;top:63.00px;font-size:8.11px;color:#e0e0e0;">screenshot_1648717035.png - C:/Users/Admin/Desktop/=</div>
<div style="left:183px;top:73px;width:637px;height:440px;background:#4b4846"></div>
<div style="left:204px;top:76px;width:582px;height:437px;background:#d8adb8;overflow:hidden"></div>
<svg style="position:absolute;left:204px;top:76px" width="582" height="437" viewBox="204 76 582 437">
<defs><clipPath id="gc"><path d="M430.5 305.5 C414 294 404.5 274 405 250 C405.5 212 437 186 476.5 186 C516 186 548 212 548 250 C548 275 538 295 522 305.5 L540.5 345 C530 352 522 358 516.6 360 C510 363 502 364.5 497 364.5 C485 364 470 361 460 359.5 C440 355 422 349 411 345.5 Z"/></clipPath></defs>
<path d="M537 72 L612 137" stroke="#d4a3b1" stroke-width="8" fill="none"/>
<path d="M297.3 159 V184.5 M284 171.7 H311" stroke="#d3a2b0" stroke-width="7.5" stroke-linecap="round"/>
<path d="M241.7 394 V423 M230 408.5 H254" stroke="#d3a2b0" stroke-width="6.5" stroke-linecap="round"/>
<circle cx="694" cy="448" r="3.5" fill="#d4a4b1"/>
<path d="M477.5 186 V179" stroke="#e6cbb2" stroke-width="2.5"/>
<ellipse cx="477.5" cy="173" rx="9.5" ry="7.5" fill="#e6cbb2"/>
<ellipse cx="473.5" cy="172.5" rx="2.2" ry="3.8" transform="rotate(-35 473.5 172.5)" fill="#4e8a3e"/>
<ellipse cx="481.8" cy="175" rx="3.6" ry="2" transform="rotate(-30 481.8 175)" fill="#4e8a3e"/>
<path d="M430.5 305.5 C414 294 404.5 274 405 250 C405.5 212 437 186 476.5 186 C516 186 548 212 548 250 C548 275 538 295 522 305.5 L540.5 345 C530 352 522 358 516.6 360 C510 363 502 364.5 497 364.5 C485 364 470 361 460 359.5 C440 355 422 349 411 345.5 Z" fill="#ffffff"/>
<path clip-path="url(#gc)" d="M478 180 C504 196 521 224 519.5 252 C518.5 276 509 296 506 325 L503.5 372 L570 372 L570 170 Z" fill="#c99a6c"/>
<path d="M430.5 305.5 C414 294 404.5 274 405 250 C405.5 212 437 186 476.5 186 C516 186 548 212 548 250 C548 275 538 295 522 305.5 L540.5 345 C530 352 522 358 516.6 360 C510 363 502 364.5 497 364.5 C485 364 470 361 460 359.5 C440 355 422 349 411 345.5 Z" fill="none" stroke="#e6cbb2" stroke-width="4.5" stroke-linejoin="round"/>
<circle cx="447" cy="243.3" r="9" fill="#000"/>
<circle cx="495.3" cy="243" r="9" fill="#000"/>
<path d="M424.5 220 V228.6 M431 211.7 V235.5" stroke="#9a9a9a" stroke-width="2.6"/>
<path d="M460 278 L470 267.5 L479.7 278" fill="none" stroke="#000" stroke-width="3" stroke-linecap="round" stroke-linejoin="round"/>
<path d="M455 320.5 C464 323 465.5 335 455 338.5 M489.5 320.5 C480.5 323 479 335 489.5 338.5" fill="none" stroke="#e6cbb2" stroke-width="2.6" stroke-linecap="round"/>
<g fill="none" stroke="#141014" stroke-width="2" stroke-linecap="round" stroke-linejoin="round">
<path d="M529.5 162.5 L539.5 162 M531.5 158.5 L537 166 M537 158.5 L532 166.5" stroke-width="1.7"/><path d="M534.3 164 L533.6 173" stroke-width="1.1"/>
<path d="M545 194.5 C546.5 190 552 183 551 179 C550 176.5 547 178 546.5 184 C545.8 190 546 197 548 197 C549 197 549.8 196 550.2 195"/>
<path d="M553.5 190.5 C555 188 559 188.5 559 192.5 C559 196.5 554.5 198 553 195 C552.5 193 553.5 191.5 555.5 191.5 C557.5 191.5 559 191 560.5 190"/>
<g transform="translate(1.5 0)"><path d="M562.5 195 C564 190 570 183 569 179 C568 176.5 565 178 564.5 184 C563.8 190 564 197 566 197 C567.5 197 568.5 195.5 569 193.5"/>
<path d="M576 190.5 C573 187.5 568.5 191 569.5 195 C570.5 198.5 574.5 197 576 191 L576.2 195.5 C576.5 197.5 578 197.5 578.8 195.5 M570.5 184.5 C571.5 186.8 575 186.8 576 184.5 M573.5 183 L577 180.5"/>
<path d="M579 196.5 L579.5 190.5 C581 187.5 585.5 187.5 586 191.5 L586.5 196.5"/>
<path d="M595 190.5 C591.5 187.5 587.5 191 588.5 195 C589.5 198.5 593.5 197 595 191 L595.3 203 C595.3 211.5 590.5 213.5 590.5 208 C590.5 204.5 595 202.5 599 199.5"/>
</g>
<path d="M601 196.5 C598.5 193 600 189.5 602.5 190"/>
</g>
</svg>
<div style="left:805px;top:73px;width:15px;height:440px;background:linear-gradient(90deg,#484644,#434140 60%,#3c3a39)"></div>
<div style="left:806px;top:503px;width:14px;height:12px;background:#2c2c2c"></div>
<svg style="position:absolute;left:806px;top:503px" width="14" height="12" viewBox="0 0 14 12"><path d="M3.5 3.5 H10.5 L7 9Z" fill="#c8c8c8"/></svg>
<div style="left:183px;top:513px;width:637px;height:17px;background:linear-gradient(#3c3c3c,#2a2a2a)"></div>
<div style="left:424.5px;top:515.5px;width:156.5px;height:14px;background:linear-gradient(#7c7e7a,#5c5e5c);border-radius:4px"></div>
<svg style="position:absolute;left:183px;top:514px" width="12" height="16" viewBox="0 0 12 16"><path d="M9 4 V12 L3.5 8Z" fill="#bdbdbd"/></svg>
<svg style="position:absolute;left:808px;top:514px" width="12" height="16" viewBox="0 0 12 16"><path d="M4 4 V12 L10 8Z" fill="#c8c8c8"/></svg>
<div style="left:820px;top:57px;width:5px;height:474px;background:#1e1e1e"></div>
<div style="left:825px;top:57px;width:199px;height:474px;background:#4a4a4a"></div>
<div style="left:825px;top:57px;width:199px;height:1px;background:#4f7ca8"></div>
<div style="left:825px;top:58px;width:199px;height:15px;background:#3a3938"></div>
<div class="t" style="left:905px;top:63.00px;font-size:7.9px;color:#cfcfcf;">Màu</div>
<svg style="position:absolute;left:999px;top:61px" width="22" height="10" viewBox="0 0 22 10"><path d="M1.5 2.5 V8.5 H7.5 V5.5" fill="none" stroke="#c8c8c8" stroke-width="1.1"/><path d="M4.5 5.5 L8 2 M5.8 1.2 H8.8 V4.2" fill="none" stroke="#c8c8c8" stroke-width="1.1"/><path d="M14.8 3 L20 8.2 M20 3 L14.8 8.2" stroke="#e0e0e0" stroke-width="1.7"/></svg>
<div style="left:0px;top:530px;width:1024px;height:16px;background:#2b2b2b"></div>
<div class="t" style="left:5px;top:536.00px;font-size:8.28px;color:#d0d0d0;">1600 * 1200 pixel</div>
<div class="t" style="left:75.6px;top:535.00px;font-size:8.63px;color:#d0d0d0;">(6.8 * 5.1cm)</div>
<div class="t" style="left:132px;top:535.00px;font-size:8.66px;color:#d0d0d0;">600 dpi</div>
<div class="t" style="left:166.8px;top:535.00px;font-size:8.34px;color:#d0d0d0;">48 %</div>
<div class="t" style="left:192.8px;top:536.00px;font-size:8.22px;color:#d0d0d0;">( 608, 1185 )</div>
<div class="t" style="left:246px;top:535.00px;font-size:8.92px;color:#d0d0d0;">Vẽ một đường thẳng bằng cách giữ phím Shift, Thay đổi cỡ cọ bằng cách giữ phím Ctrl, Alt và kéo</div>
<div style="left:0px;top:546px;width:1024px;height:30px;background:#000000"></div>
<svg style="position:absolute;left:0;top:546px" width="1024" height="30" viewBox="0 546 1024 30">
<g fill="#ffffff"><path d="M12 555.8 L17.2 555.1 V560.5 H12Z"/><path d="M18.2 554.9 L24.2 554 V560.5 H18.2Z"/><path d="M12 561.5 H17.2 V567 L12 566.3Z"/><path d="M18.2 561.5 H24.2 V568 L18.2 567.2Z"/></g>
<g fill="none" stroke="#e8e8e8" stroke-width="1.2"><rect x="48.5" y="556" width="12" height="10" rx="1.5"/><path d="M46.3 557.5 V564.5 M62.7 557.5 V564.5"/></g>
<defs><radialGradient id="ffg" cx="0.4" cy="0.65" r="0.7"><stop offset="0" stop-color="#ffbd4f"/><stop offset="0.55" stop-color="#ff6a2a"/><stop offset="1" stop-color="#e22850"/></radialGradient></defs>
<circle cx="91.3" cy="561.3" r="8.3" fill="url(#ffg)"/>
<path d="M92 552 C96 554 99.5 557 99.8 561 L96 557 Z" fill="#ffd44a"/>
<circle cx="90.5" cy="561.8" r="3.8" fill="#7b4fd6"/>
<path d="M84 557 C86 553 90 553 92 555 C89 555 87 557 87 560Z" fill="#ffb030"/>
<path d="M128.5 553 C123 553 120.5 557.5 120.8 561.5 C121 566 124.5 569 129 569 C131.5 569 133.5 568 135 567 V563.5 C133 565.5 131 566 129 566 C126.5 566 124.5 564.5 124.3 562.3 H136 C136.3 557 133 553 128.5 553Z M124.5 559.8 C125 557.5 126.8 556 129 556 C131.3 556 133 557.5 133 559.8Z" fill="#1f86db"/>
<path d="M157 557 H172.5 V570 H157Z" fill="#ffffff"/><path d="M161 557 C161 551 168.5 551 168.5 557" fill="none" stroke="#fff" stroke-width="1.3"/>
<g fill="#000"><rect x="160.5" y="559.5" width="4" height="3.8"/><rect x="165.3" y="559.5" width="4" height="3.8"/><rect x="160.5" y="564.1" width="4" height="3.8"/><rect x="165.3" y="564.1" width="4" height="3.8"/></g>
<path d="M193.5 555 H200 L201.5 556.5 H209.5 V567.5 H193.5Z" fill="#f6d56e"/>
<path d="M193.5 559 H209.5 V567.5 H205 V564 H198 V567.5 H193.5Z" fill="#f9dd80"/>
<path d="M196.5 563 H206.5 V567.5 H204.5 V565 H198.5 V567.5 H196.5Z" fill="#2a8fd9"/>
<path d="M230 553 H244 L246 555 V567.5 H230Z" fill="#dcefd8"/>
<path d="M233 556.5 L240 566 M240 556.5 L233 566" stroke="#2f8a3c" stroke-width="2.2"/>
<path d="M241 560 H246 V567.5 H241Z" fill="#b8e0b0"/>
<g transform="translate(275 560.5)"><circle r="8" fill="#dd4b39"/><path d="M0 0 L-6.93 4 A8 8 0 0 0 6.93 4Z" fill="#2ea44f"/><path d="M0 0 L6.93 4 A8 8 0 0 0 6.93 -4 L 0 -8 A8 8 0 0 1 6.93 -4Z" fill="#f5c02c"/><path d="M0 0 L-6.93 4 L-6.93 -4Z" fill="#2ea44f"/><circle r="3.6" fill="#fff"/><circle r="2.8" fill="#4a8af4"/></g>
<g transform="translate(311.5 559.5)"><circle r="8" fill="#dd4b39"/><path d="M0 0 L-6.93 4 A8 8 0 0 0 6.93 4Z" fill="#2ea44f"/><path d="M0 0 L6.93 4 A8 8 0 0 0 6.93 -4 L 0 -8 A8 8 0 0 1 6.93 -4Z" fill="#f5c02c"/><path d="M0 0 L-6.93 4 L-6.93 -4Z" fill="#2ea44f"/><circle r="3.6" fill="#fff"/><circle r="2.8" fill="#4a8af4"/></g>
<circle cx="316" cy="565" r="5" fill="#c8b8b0" stroke="#eee" stroke-width="1"/><circle cx="316" cy="564" r="2.2" fill="#8a5a50"/>
<rect x="340" y="552.5" width="17.5" height="17.5" rx="3" fill="#f4f4f4"/>
<circle cx="348.7" cy="562.5" r="5.2" fill="#1fb3a6"/><path d="M343.5 562 C344 557 348 556 351 555 C350 558 353 559 352 562Z" fill="#e8412c"/><path d="M353.8 562.5 A5.2 5.2 0 0 1 349 567.7 C352 565 352.5 563 353.8 562.5Z" fill="#8ccf3a"/>
<rect x="297" y="574" width="30" height="2" fill="#76b9ed"/><rect x="333" y="574" width="30" height="2" fill="#76b9ed"/>
<path d="M903 563 L907 559 L911 563" fill="none" stroke="#fff" stroke-width="1.1"/>
<rect x="919.5" y="555.5" width="11" height="9" fill="none" stroke="#fff" stroke-width="1"/><path d="M921.5 558 H928.5 M921.5 560.5 H926" stroke="#fff" stroke-width="0.9"/><circle cx="927.5" cy="565" r="3" fill="#000" stroke="#fff" stroke-width="1"/><path d="M926 565 H929" stroke="#fff" stroke-width="0.9"/>
<path d="M1020.5 546 V576" stroke="#555" stroke-width="1"/>
</svg>
<div class="t" style="left:975px;top:550.00px;font-size:8.32px;color:#ffffff;-webkit-text-stroke:0">5:22 PM</div>
<div class="t" style="left:968px;top:563.00px;font-size:8.79px;color:#ffffff;-webkit-text-stroke:0">02/04/2022</div>
<div class="t" style="left:942px;top:559.00px;font-size:7.13px;color:#ffffff;-webkit-text-stroke:0">VIE</div>
<div style="left:860px;top:74px;width:144px;height:182px;background:linear-gradient(to bottom,rgba(0,0,0,0),#000),linear-gradient(to right,#fff,#f00)"></div>
<div style="left:1004px;top:74px;width:4px;height:182px;background:#232323"></div>
<div style="left:1008px;top:74px;width:14px;height:182px;background:linear-gradient(to bottom,#ff0000 0%,#ff00ff 17%,#0000ff 33%,#00ffff 50%,#00ff00 67%,#ffff00 83%,#ff0000 100%)"></div>
<div style="left:1009px;top:247px;width:12px;height:12px;border-radius:50%;border:2px solid #fff"></div>
<div style="left:825px;top:256px;width:199px;height:6px;background:#232323"></div>
<div style="left:825px;top:261px;width:199px;height:1px;background:#4f7ca8"></div>
<div style="left:825px;top:262px;width:199px;height:15px;background:#3a3938"></div>
<div class="t" style="left:915px;top:267.00px;font-size:7.9px;color:#cfcfcf;">tiêu</div>
<svg style="position:absolute;left:999px;top:265px" width="22" height="10" viewBox="0 0 22 10"><path d="M1.5 2.5 V8.5 H7.5 V5.5" fill="none" stroke="#c8c8c8" stroke-width="1.1"/><path d="M4.5 5.5 L8 2 M5.8 1.2 H8.8 V4.2" fill="none" stroke="#c8c8c8" stroke-width="1.1"/><path d="M14.8 3 L20 8.2 M20 3 L14.8 8.2" stroke="#e0e0e0" stroke-width="1.7"/></svg>
<div style="left:825px;top:278px;width:199px;height:22px;background:#262626"></div>
<div style="left:919px;top:280px;width:17px;height:17px;background:#434343;border-radius:3px;box-shadow:0 0 0 1px #2e2e2e"></div>
<svg style="position:absolute;left:919px;top:280px" width="17" height="17" viewBox="0 0 17 17"><path d="M4 6.5 A5.3 5.3 0 1 0 6 4.2" fill="none" stroke="#e0e0e0" stroke-width="1.3"/><path d="M3 3 L7.5 3.5 L4 7Z" fill="#e0e0e0"/><rect x="6" y="6.5" width="5" height="4" fill="#e0e0e0" transform="rotate(-20 8.5 8.5)"/></svg>
<div style="left:939px;top:280px;width:18px;height:17px;background:#1e1e1e;border:1px solid #3e3e3e;border-radius:3px"></div>
<svg style="position:absolute;left:939px;top:280px" width="18" height="17" viewBox="0 0 18 17"><rect x="6" y="5.5" width="6" height="6" fill="#e0e0e0"/><path d="M3.5 3 L6 5.5 M14.5 3 L12 5.5 M3.5 14 L6 11.5 M14.5 14 L12 11.5" stroke="#e0e0e0" stroke-width="1.2"/></svg>
<div style="left:959px;top:280px;width:17px;height:17px;background:#434343;border-radius:3px;box-shadow:0 0 0 1px #2e2e2e"></div>
<svg style="position:absolute;left:959px;top:280px" width="17" height="17" viewBox="0 0 17 17"><path d="M13 6.5 A5.3 5.3 0 1 1 11 4.2" fill="none" stroke="#e0e0e0" stroke-width="1.3"/><path d="M14 3 L9.5 3.5 L13 7Z" fill="#e0e0e0"/><rect x="6" y="6.5" width="5" height="4" fill="#e0e0e0" transform="rotate(20 8.5 8.5)"/></svg>
<div style="left:981px;top:283px;width:1px;height:11px;background:#555"></div>
<div style="left:985px;top:280px;width:17px;height:17px;background:#434343;border-radius:3px;box-shadow:0 0 0 1px #2e2e2e"></div>
<svg style="position:absolute;left:985px;top:280px" width="17" height="17" viewBox="0 0 17 17"><rect x="3.5" y="7" width="4" height="7" fill="#e0e0e0"/><rect x="9.5" y="7" width="4" height="7" fill="none" stroke="#e0e0e0"/><path d="M5 6 C5 2 12 2 12 6" fill="none" stroke="#e0e0e0"/></svg>
<div style="left:825px;top:300px;width:199px;height:77px;background:#484848"></div>
<div style="left:826px;top:300px;width:151px;height:74px;background:#d8adb8;border:1.5px solid #d42a2a;border-right-width:2.5px"></div>
<svg style="position:absolute;left:827px;top:301.5px" width="147.5" height="71" viewBox="827 301.5 147.5 71">
<path d="M940 301 L975 330 M955 301 L975 318" stroke="#cf9cab" stroke-width="1.2"/>
<path d="M905 350 C902 335 905 320 916 319 C924 318 930 325 931 333 C932 340 929 345 931 350 Z" fill="#fff"/>
<path d="M920 318.8 C928 321 932 328 932 335 C932 342 929.5 346 932 350 L925 350 C924 343 927 336 923 324Z" fill="#c99a6c"/><path d="M905 350 C902 335 905 320 916 319 C924 318 931 325 932 333 C932.5 340 930 345 932 350" fill="none" stroke="#e6cbb2" stroke-width="0.9"/><path d="M930 314 L930.5 318 M928.5 316 L932 316" stroke="#222" stroke-width="0.6"/>
<circle cx="916" cy="328.8" r="1.5" fill="#000"/><circle cx="924.5" cy="328.8" r="1.5" fill="#000"/>
<path d="M920 334 L921 333 L922 334" stroke="#000" stroke-width="0.6" fill="none"/>
<path d="M933 321 C934 318 935 318 935 321 C936 319 938 319 938 321 C939 319 941 319 941 321 C942 319 944 319 944 321 C945 319 947 319 947 321 C948 319 949 319 950 320.5" fill="none" stroke="#2a2028" stroke-width="0.7"/>
<path d="M954 340 V344 M952 342 H956 M956 362 V366 M954 364 H958" stroke="#d0a0ae" stroke-width="1"/>
</svg>
<div style="left:825px;top:374px;width:199px;height:4px;background:#232323"></div>
<div style="left:825px;top:377px;width:199px;height:1px;background:#4f7ca8"></div>
<div style="left:825px;top:378px;width:199px;height:15px;background:#3a3938"></div>
<div class="t" style="left:896px;top:383.00px;font-size:7.9px;color:#cfcfcf;">Bảng màu</div>
<svg style="position:absolute;left:999px;top:381px" width="22" height="10" viewBox="0 0 22 10"><path d="M1.5 2.5 V8.5 H7.5 V5.5" fill="none" stroke="#c8c8c8" stroke-width="1.1"/><path d="M4.5 5.5 L8 2 M5.8 1.2 H8.8 V4.2" fill="none" stroke="#c8c8c8" stroke-width="1.1"/><path d="M14.8 3 L20 8.2 M20 3 L14.8 8.2" stroke="#e0e0e0" stroke-width="1.7"/></svg>
<div style="left:825px;top:394px;width:199px;height:136px;background:#4a4a4a"></div>
<div style="left:826.7px;top:395.6px;width:9.5px;height:9.5px;background:#3a2008"></div>
<div style="left:837.2px;top:395.6px;width:9.5px;height:9.5px;background:#4a2a0a"></div>
<div style="left:847.8px;top:395.6px;width:9.5px;height:9.5px;background:#5a300c"></div>
<div style="left:858.4px;top:395.6px;width:9.5px;height:9.5px;background:#6a3810"></div>
<div style="left:868.9px;top:395.6px;width:9.5px;height:9.5px;background:#7a4014"></div>
<div style="left:879.5px;top:395.6px;width:9.5px;height:9.5px;background:#8a4818"></div>
<div style="left:890.0px;top:395.6px;width:9.5px;height:9.5px;background:#a05820"></div>
<div style="left:900.6px;top:395.6px;width:9.5px;height:9.5px;background:#6a3a12"></div>
<div style="left:911.1px;top:395.6px;width:9.5px;height:9.5px;background:#6b3a12"></div>
<div style="left:921.7px;top:395.6px;width:9.5px;height:9.5px;background:#7d4215"></div>
<div style="left:932.2px;top:395.6px;width:9.5px;height:9.5px;background:#a0602a"></div>
<div style="left:942.8px;top:395.6px;width:9.5px;height:9.5px;background:#c07535"></div>
<div style="left:953.3px;top:395.6px;width:9.5px;height:9.5px;background:#d08a4a"></div>
<div style="left:963.9px;top:395.6px;width:9.5px;height:9.5px;background:#dca57a"></div>
<div style="left:974.4px;top:395.6px;width:9.5px;height:9.5px;background:#ead5bc"></div>
<div style="left:985.0px;top:395.6px;width:9.5px;height:9.5px;background:#f5ecd8"></div>
<div style="left:995.5px;top:395.6px;width:9.5px;height:9.5px;background:#5a4a10"></div>
<div style="left:826.7px;top:406.1px;width:9.5px;height:9.5px;background:#c8a000"></div>
<div style="left:837.2px;top:406.1px;width:9.5px;height:9.5px;background:#e0b800"></div>
<div style="left:847.8px;top:406.1px;width:9.5px;height:9.5px;background:#f0c800"></div>
<div style="left:858.4px;top:406.1px;width:9.5px;height:9.5px;background:#ffd000"></div>
<div style="left:868.9px;top:406.1px;width:9.5px;height:9.5px;background:#ffe040"></div>
<div style="left:879.5px;top:406.1px;width:9.5px;height:9.5px;background:#fff080"></div>
<div style="left:890.0px;top:406.1px;width:9.5px;height:9.5px;background:#ffe000"></div>
<div style="left:900.6px;top:406.1px;width:9.5px;height:9.5px;background:#ffd700"></div>
<div style="left:911.1px;top:406.1px;width:9.5px;height:9.5px;background:#ffd700"></div>
<div style="left:921.7px;top:406.1px;width:9.5px;height:9.5px;background:#f0c820"></div>
<div style="left:932.2px;top:406.1px;width:9.5px;height:9.5px;background:#f5dc6e"></div>
<div style="left:942.8px;top:406.1px;width:9.5px;height:9.5px;background:#f8e8a0"></div>
<div style="left:953.3px;top:406.1px;width:9.5px;height:9.5px;background:#f5f0c8"></div>
<div style="left:963.9px;top:406.1px;width:9.5px;height:9.5px;background:#fafaf0"></div>
<div style="left:974.4px;top:406.1px;width:9.5px;height:9.5px;background:#4a6a1a"></div>
<div style="left:985.0px;top:406.1px;width:9.5px;height:9.5px;background:#6a8a2a"></div>
<div style="left:995.5px;top:406.1px;width:9.5px;height:9.5px;background:#7a9a3a"></div>
<div style="left:826.7px;top:416.5px;width:9.5px;height:9.5px;background:#3a6a2a"></div>
<div style="left:837.2px;top:416.5px;width:9.5px;height:9.5px;background:#4a7a3a"></div>
<div style="left:847.8px;top:416.5px;width:9.5px;height:9.5px;background:#5a8a4a"></div>
<div style="left:858.4px;top:416.5px;width:9.5px;height:9.5px;background:#6a9a5a"></div>
<div style="left:868.9px;top:416.5px;width:9.5px;height:9.5px;background:#7aaa6a"></div>
<div style="left:879.5px;top:416.5px;width:9.5px;height:9.5px;background:#8aba7a"></div>
<div style="left:890.0px;top:416.5px;width:9.5px;height:9.5px;background:#9aca8a"></div>
<div style="left:900.6px;top:416.5px;width:9.5px;height:9.5px;background:#5a9a4a"></div>
<div style="left:911.1px;top:416.5px;width:9.5px;height:9.5px;background:#5a9a4a"></div>
<div style="left:921.7px;top:416.5px;width:9.5px;height:9.5px;background:#8ab87a"></div>
<div style="left:932.2px;top:416.5px;width:9.5px;height:9.5px;background:#aad0a0"></div>
<div style="left:942.8px;top:416.5px;width:9.5px;height:9.5px;background:#d0ecd0"></div>
<div style="left:953.3px;top:416.5px;width:9.5px;height:9.5px;background:#e8f8e8"></div>
<div style="left:963.9px;top:416.5px;width:9.5px;height:9.5px;background:#1a5a2a"></div>
<div style="left:974.4px;top:416.5px;width:9.5px;height:9.5px;background:#2a7a3a"></div>
<div style="left:985.0px;top:416.5px;width:9.5px;height:9.5px;background:#5a9a6a"></div>
<div style="left:995.5px;top:416.5px;width:9.5px;height:9.5px;background:#8abf9a"></div>
<div style="left:826.7px;top:427.0px;width:9.5px;height:9.5px;background:#2a6a6a"></div>
<div style="left:837.2px;top:427.0px;width:9.5px;height:9.5px;background:#3a7a7a"></div>
<div style="left:847.8px;top:427.0px;width:9.5px;height:9.5px;background:#4a8a8a"></div>
<div style="left:858.4px;top:427.0px;width:9.5px;height:9.5px;background:#5a9a9a"></div>
<div style="left:868.9px;top:427.0px;width:9.5px;height:9.5px;background:#6aaaaa"></div>
<div style="left:879.5px;top:427.0px;width:9.5px;height:9.5px;background:#7ababa"></div>
<div style="left:890.0px;top:427.0px;width:9.5px;height:9.5px;background:#8acaca"></div>
<div style="left:900.6px;top:427.0px;width:9.5px;height:9.5px;background:#d8f0e8"></div>
<div style="left:911.1px;top:427.0px;width:9.5px;height:9.5px;background:#d8f0e8"></div>
<div style="left:921.7px;top:427.0px;width:9.5px;height:9.5px;background:#0a6a5a"></div>
<div style="left:932.2px;top:427.0px;width:9.5px;height:9.5px;background:#1a8a7a"></div>
<div style="left:942.8px;top:427.0px;width:9.5px;height:9.5px;background:#3aa090"></div>
<div style="left:953.3px;top:427.0px;width:9.5px;height:9.5px;background:#70c0b0"></div>
<div style="left:963.9px;top:427.0px;width:9.5px;height:9.5px;background:#a0d8d0"></div>
<div style="left:974.4px;top:427.0px;width:9.5px;height:9.5px;background:#e0f8f8"></div>
<div style="left:985.0px;top:427.0px;width:9.5px;height:9.5px;background:#0a5a60"></div>
<div style="left:995.5px;top:427.0px;width:9.5px;height:9.5px;background:#1a7080"></div>
<div style="left:826.7px;top:437.4px;width:9.5px;height:9.5px;background:#6a9a9a"></div>
<div style="left:837.2px;top:437.4px;width:9.5px;height:9.5px;background:#8ab8b8"></div>
<div style="left:847.8px;top:437.4px;width:9.5px;height:9.5px;background:#c8e0e0"></div>
<div style="left:858.4px;top:437.4px;width:9.5px;height:9.5px;background:#e0f0f0"></div>
<div style="left:868.9px;top:437.4px;width:9.5px;height:9.5px;background:#f8fcfc"></div>
<div style="left:879.5px;top:437.4px;width:9.5px;height:9.5px;background:#1a3a6a"></div>
<div style="left:890.0px;top:437.4px;width:9.5px;height:9.5px;background:#4a6a9a"></div>
<div style="left:900.6px;top:437.4px;width:9.5px;height:9.5px;background:#6a8aaa"></div>
<div style="left:911.1px;top:437.4px;width:9.5px;height:9.5px;background:#90b0c8"></div>
<div style="left:921.7px;top:437.4px;width:9.5px;height:9.5px;background:#c8d8e8"></div>
<div style="left:932.2px;top:437.4px;width:9.5px;height:9.5px;background:#b8d0e8"></div>
<div style="left:942.8px;top:437.4px;width:9.5px;height:9.5px;background:#d8e8f8"></div>
<div style="left:953.3px;top:437.4px;width:9.5px;height:9.5px;background:#e8f4fc"></div>
<div style="left:963.9px;top:437.4px;width:9.5px;height:9.5px;background:#0a0a6a"></div>
<div style="left:974.4px;top:437.4px;width:9.5px;height:9.5px;background:#2a2a8a"></div>
<div style="left:985.0px;top:437.4px;width:9.5px;height:9.5px;background:#4a3a9a"></div>
<div style="left:995.5px;top:437.4px;width:9.5px;height:9.5px;background:#6a5ab8"></div>
<div style="left:826.7px;top:447.9px;width:9.5px;height:9.5px;background:#9890d8"></div>
<div style="left:837.2px;top:447.9px;width:9.5px;height:9.5px;background:#b8b0f0"></div>
<div style="left:847.8px;top:447.9px;width:9.5px;height:9.5px;background:#d8d8f8"></div>
<div style="left:858.4px;top:447.9px;width:9.5px;height:9.5px;background:#3a1a6a"></div>
<div style="left:868.9px;top:447.9px;width:9.5px;height:9.5px;background:#4a2080"></div>
<div style="left:879.5px;top:447.9px;width:9.5px;height:9.5px;background:#6a3a9a"></div>
<div style="left:890.0px;top:447.9px;width:9.5px;height:9.5px;background:#8a5ab8"></div>
<div style="left:900.6px;top:447.9px;width:9.5px;height:9.5px;background:#a888d0"></div>
<div style="left:911.1px;top:447.9px;width:9.5px;height:9.5px;background:#c8b8e0"></div>
<div style="left:921.7px;top:447.9px;width:9.5px;height:9.5px;background:#e0d0f0"></div>
<div style="left:932.2px;top:447.9px;width:9.5px;height:9.5px;background:#5a108a"></div>
<div style="left:942.8px;top:447.9px;width:9.5px;height:9.5px;background:#7a2a9a"></div>
<div style="left:953.3px;top:447.9px;width:9.5px;height:9.5px;background:#9a4ab0"></div>
<div style="left:963.9px;top:447.9px;width:9.5px;height:9.5px;background:#b87ac8"></div>
<div style="left:974.4px;top:447.9px;width:9.5px;height:9.5px;background:#e8c8f0"></div>
<div style="left:985.0px;top:447.9px;width:9.5px;height:9.5px;background:#d8b0e0"></div>
<div style="left:995.5px;top:447.9px;width:9.5px;height:9.5px;background:#f8e8f8"></div>
<div style="left:826.7px;top:458.3px;width:9.5px;height:9.5px;background:#6a0a6a"></div>
<div style="left:837.2px;top:458.3px;width:9.5px;height:9.5px;background:#9a2a9a"></div>
<div style="left:847.8px;top:458.3px;width:9.5px;height:9.5px;background:#b858c0"></div>
<div style="left:858.4px;top:458.3px;width:9.5px;height:9.5px;background:#c888d0"></div>
<div style="left:868.9px;top:458.3px;width:9.5px;height:9.5px;background:#e0c0e8"></div>
<div style="left:879.5px;top:458.3px;width:9.5px;height:9.5px;background:#f0e0f0"></div>
<div style="left:890.0px;top:458.3px;width:9.5px;height:9.5px;background:#fcf0fc"></div>
<div style="left:900.6px;top:458.3px;width:9.5px;height:9.5px;background:#7a1040"></div>
<div style="left:911.1px;top:458.3px;width:9.5px;height:9.5px;background:#9a2060"></div>
<div style="left:921.7px;top:458.3px;width:9.5px;height:9.5px;background:#a04080"></div>
<div style="left:932.2px;top:458.3px;width:9.5px;height:9.5px;background:#b05090"></div>
<div style="left:942.8px;top:458.3px;width:9.5px;height:9.5px;background:#c878b0"></div>
<div style="left:953.3px;top:458.3px;width:9.5px;height:9.5px;background:#e0a0c8"></div>
<div style="left:963.9px;top:458.3px;width:9.5px;height:9.5px;background:#f0d0e0"></div>
<div style="left:974.4px;top:458.3px;width:9.5px;height:9.5px;background:#f8e8f0"></div>
<div style="left:985.0px;top:458.3px;width:9.5px;height:9.5px;background:#8a1030"></div>
<div style="left:995.5px;top:458.3px;width:9.5px;height:9.5px;background:#a02040"></div>
<div style="left:826.7px;top:468.8px;width:9.5px;height:9.5px;background:#a04060"></div>
<div style="left:837.2px;top:468.8px;width:9.5px;height:9.5px;background:#c06080"></div>
<div style="left:847.8px;top:468.8px;width:9.5px;height:9.5px;background:#d890a0"></div>
<div style="left:858.4px;top:468.8px;width:9.5px;height:9.5px;background:#f0c0d0"></div>
<div style="left:868.9px;top:468.8px;width:9.5px;height:9.5px;background:#f8d8e0"></div>
<div style="left:879.5px;top:468.8px;width:9.5px;height:9.5px;background:#f8f0f0"></div>
<div style="left:890.0px;top:468.8px;width:9.5px;height:9.5px;background:#404040"></div>
<div style="left:900.6px;top:468.8px;width:9.5px;height:9.5px;background:#606060"></div>
<div style="left:911.1px;top:468.8px;width:9.5px;height:9.5px;background:#8a8a8a"></div>
<div style="left:921.7px;top:468.8px;width:9.5px;height:9.5px;background:#9a9a9a"></div>
<div style="left:932.2px;top:468.8px;width:9.5px;height:9.5px;background:#b8b8b8"></div>
<div style="left:942.8px;top:468.8px;width:9.5px;height:9.5px;background:#cacaca"></div>
<div style="left:953.3px;top:468.8px;width:9.5px;height:9.5px;background:#f8f8f8"></div>
<div style="left:963.9px;top:468.8px;width:9.5px;height:9.5px;background:#e8e8e8"></div>
<div style="left:974.4px;top:468.8px;width:9.5px;height:9.5px;background:#101010;outline:1.5px solid #c02020"></div>
<div style="left:985.0px;top:468.8px;width:9.5px;height:9.5px;background:#e8a088"></div>
<div style="left:1006px;top:395px;width:17px;height:111px;background:#2e2e2e"></div>
<div style="left:1008px;top:405px;width:13px;height:90px;background:#6a6a6a;border-radius:6px"></div>
<svg style="position:absolute;left:1009px;top:397px" width="11" height="7"><path d="M1.5 6 L5.5 1 L9.5 6Z" fill="#bbb"/></svg>
<svg style="position:absolute;left:1009px;top:497px" width="11" height="7"><path d="M1.5 1 L5.5 6 L9.5 1Z" fill="#bbb"/></svg>
<div style="left:825px;top:506px;width:199px;height:24px;background:#262626"></div>
<div style="left:829px;top:509px;width:17px;height:18px;background:#434343;border-radius:3px;box-shadow:0 0 0 1px #2e2e2e"></div>
<svg style="position:absolute;left:829px;top:509px" width="17" height="18" viewBox="0 0 17 18"><g transform="translate(0 0.5)"><path d="M4.5 3 H10 L13 6 V14.5 H4.5Z" fill="none" stroke="#e0e0e0" stroke-width="1.1"/><path d="M10 3 V6 H13" fill="none" stroke="#e0e0e0" stroke-width="1"/></g></svg>
<div style="left:850px;top:509px;width:17px;height:18px;background:#434343;border-radius:3px;box-shadow:0 0 0 1px #2e2e2e"></div>
<svg style="position:absolute;left:850px;top:509px" width="17" height="18" viewBox="0 0 17 18"><path d="M3.5 5 H13.5" stroke="#e0e0e0" stroke-width="1.2"/><path d="M6.5 4.8 V3.3 H10.5 V4.8" fill="none" stroke="#e0e0e0" stroke-width="1"/><path d="M4.5 6 H12.5 V14 H4.5Z" fill="none" stroke="#e0e0e0" stroke-width="1.1"/><path d="M6.7 7.5 V12.5 M8.5 7.5 V12.5 M10.3 7.5 V12.5" stroke="#e0e0e0" stroke-width="1"/></svg>
<div style="left:871px;top:512px;width:1px;height:11px;background:#555"></div>
<div class="t" style="left:876px;top:514.00px;font-size:8px;color:#bbb;">---</div>
<div style="left:601px;top:60px;width:311px;height:381px;background:#3a3a3a"></div>
<div style="left:601px;top:60px;width:311px;height:23px;background:#ffffff"></div>
<div class="t" style="left:607.7px;top:68.00px;font-size:8.37px;color:#a0a0a0;">Lớp</div>
<div style="left:897px;top:66px;width:15px;height:14px;background:#e6e6e6"></div>
<div style="left:605px;top:88px;width:75px;height:12px;background:#2a2828"></div>
<div class="t" style="left:606.2px;top:91.00px;font-size:8.34px;color:#d8d8d8;">Độ trong</div>
<div style="left:685px;top:88px;width:181px;height:12px;background:linear-gradient(90deg,#80c4f4,#4c96d2)"></div>
<div style="left:869px;top:88px;width:39px;height:12px;background:#2a2828"></div>
<div class="t" style="left:871.4px;top:92.00px;font-size:8.25px;color:#d8d8d8;">100 %</div>
<div style="left:605px;top:104px;width:75px;height:16px;background:#2a2828"></div>
<div class="t" style="left:606px;top:110.00px;font-size:8.15px;color:#d8d8d8;">Pha trộn</div>
<div style="left:685px;top:104px;width:223px;height:16px;background:#464646"></div>
<div class="t" style="left:686.7px;top:110.00px;font-size:7.81px;color:#c8c8c8;">Bình thường</div>
<svg style="position:absolute;left:897px;top:110px" width="8" height="5"><path d="M0.5 0.5 L7.5 0.5 L4 4.5Z" fill="#bbb"/></svg>
<div style="left:606px;top:125px;width:98px;height:14px;background:#2a2828"></div>
<div style="left:609px;top:128px;width:8.5px;height:8.5px;border:1px solid #a8a8a8"></div>
<div class="t" style="left:621px;top:130.00px;font-size:7.9px;color:#d0d0d0;">Bảo vệ alpha</div>
<div style="left:708px;top:125px;width:97px;height:14px;background:#2a2828"></div>
<div style="left:711px;top:128px;width:8.5px;height:8.5px;border:1px solid #a8a8a8"></div>
<div class="t" style="left:723px;top:130.00px;font-size:7.9px;color:#d0d0d0;">Xén bớt</div>
<div style="left:809px;top:125px;width:99px;height:14px;background:#2a2828"></div>
<div style="left:812px;top:128px;width:8.5px;height:8.5px;border:1px solid #a8a8a8"></div>
<div class="t" style="left:824px;top:130.00px;font-size:7.9px;color:#d0d0d0;">Khóa</div>
<div style="left:603px;top:142px;width:293px;height:277px;background:#474747"></div>
<div style="left:603px;top:143px;width:293px;height:29px;background:#595959"></div>
<svg style="position:absolute;left:604px;top:151px" width="14" height="14" viewBox="0 0 14 14"><circle cx="7" cy="7" r="3.8" fill="#d2d2d2" stroke="#8a8a8a" stroke-width="0.6"/></svg>
<div style="left:630px;top:148px;width:26px;height:20px;background-color:#fff;background-image:linear-gradient(45deg,#e6e6e6 25%,transparent 25%,transparent 75%,#e6e6e6 75%),linear-gradient(45deg,#e6e6e6 25%,transparent 25%,transparent 75%,#e6e6e6 75%);background-size:6px 6px;background-position:0 0,3px 3px"></div>
<svg style="position:absolute;left:630px;top:148px" width="26" height="20" viewBox="0 0 26 20"><path d="M16 4 L18 5" stroke="#888" stroke-width="0.8"/></svg>
<div class="t" style="left:668px;top:155.00px;font-size:8.8px;color:#e8e8e8;">Lớp5</div>
<div style="left:603px;top:173px;width:293px;height:29px;background:#595959"></div>
<svg style="position:absolute;left:604px;top:181px" width="14" height="14" viewBox="0 0 14 14"><circle cx="7" cy="7" r="3.8" fill="#d2d2d2" stroke="#8a8a8a" stroke-width="0.6"/></svg>
<div style="left:630px;top:178px;width:26px;height:20px;background-color:#fff;background-image:linear-gradient(45deg,#e6e6e6 25%,transparent 25%,transparent 75%,#e6e6e6 75%),linear-gradient(45deg,#e6e6e6 25%,transparent 25%,transparent 75%,#e6e6e6 75%);background-size:6px 6px;background-position:0 0,3px 3px"></div>
<div class="t" style="left:668px;top:185.00px;font-size:8.8px;color:#e8e8e8;">Lớp4</div>
<div style="left:603px;top:203px;width:293px;height:29px;background:#595959"></div>
<div style="left:618px;top:203px;width:278px;height:29px;background:#4f9bd5"></div>
<svg style="position:absolute;left:604px;top:211px" width="14" height="14" viewBox="0 0 14 14"><circle cx="7" cy="7" r="3.8" fill="#d2d2d2" stroke="#8a8a8a" stroke-width="0.6"/></svg>
<div style="left:630px;top:208px;width:26px;height:20px;background-color:#fff;background-image:linear-gradient(45deg,#e6e6e6 25%,transparent 25%,transparent 75%,#e6e6e6 75%),linear-gradient(45deg,#e6e6e6 25%,transparent 25%,transparent 75%,#e6e6e6 75%);background-size:6px 6px;background-position:0 0,3px 3px"></div>
<svg style="position:absolute;left:630px;top:208px" width="26" height="20" viewBox="0 0 26 20"><path d="M11.5 7.5 C12 5.5 15 5.5 15 7.5 C15 9 13 9.5 13 11 M13 13 V13.5" fill="none" stroke="#c05050" stroke-width="0.8"/></svg>
<div class="t" style="left:668px;top:213.00px;font-size:10.58px;color:#ffffff;;font-weight:bold">tramanh6a2tt#Hoidap247</div>
<svg style="position:absolute;left:878px;top:210px" width="15" height="15" viewBox="0 0 15 15"><g fill="#fff"><circle cx="7.5" cy="7.5" r="4.6"/><rect x="6.3" y="0.8" width="2.4" height="3.5" transform="rotate(0 7.5 7.5)"/><rect x="6.3" y="0.8" width="2.4" height="3.5" transform="rotate(45 7.5 7.5)"/><rect x="6.3" y="0.8" width="2.4" height="3.5" transform="rotate(90 7.5 7.5)"/><rect x="6.3" y="0.8" width="2.4" height="3.5" transform="rotate(135 7.5 7.5)"/><rect x="6.3" y="0.8" width="2.4" height="3.5" transform="rotate(180 7.5 7.5)"/><rect x="6.3" y="0.8" width="2.4" height="3.5" transform="rotate(225 7.5 7.5)"/><rect x="6.3" y="0.8" width="2.4" height="3.5" transform="rotate(270 7.5 7.5)"/><rect x="6.3" y="0.8" width="2.4" height="3.5" transform="rotate(315 7.5 7.5)"/></g><circle cx="7.5" cy="7.5" r="2" fill="#4f9bd5"/></svg>
<div style="left:603px;top:233px;width:293px;height:29px;background:#595959"></div>
<svg style="position:absolute;left:604px;top:241px" width="14" height="14" viewBox="0 0 14 14"><circle cx="7" cy="7" r="3.8" fill="#d2d2d2" stroke="#8a8a8a" stroke-width="0.6"/></svg>
<div style="left:630px;top:238px;width:26px;height:20px;background-color:#fff;background-image:linear-gradient(45deg,#e6e6e6 25%,transparent 25%,transparent 75%,#e6e6e6 75%),linear-gradient(45deg,#e6e6e6 25%,transparent 25%,transparent 75%,#e6e6e6 75%);background-size:6px 6px;background-position:0 0,3px 3px"></div>
<div class="t" style="left:668px;top:245.00px;font-size:8.8px;color:#e8e8e8;">Lớp2</div>
<div style="left:603px;top:263px;width:293px;height:29px;background:#595959"></div>
<svg style="position:absolute;left:604px;top:271px" width="14" height="14" viewBox="0 0 14 14"><circle cx="7" cy="7" r="3.8" fill="#d2d2d2" stroke="#8a8a8a" stroke-width="0.6"/></svg>
<div style="left:630px;top:268px;width:26px;height:20px;background:#d8adb8"></div>
<div class="t" style="left:668px;top:275.00px;font-size:8.8px;color:#e8e8e8;">Lớp1</div>
<div style="left:896px;top:142px;width:14px;height:277px;background:#3a3a3a"></div>
<svg style="position:absolute;left:898px;top:145px" width="10" height="7"><path d="M1 6 L5 1 L9 6Z" fill="#bbb"/></svg>
<div style="left:897px;top:152px;width:13px;height:256px;background:#6b6b6b;border-radius:6px"></div>
<svg style="position:absolute;left:898px;top:409px" width="10" height="7"><path d="M1 1 L5 6 L9 1Z" fill="#bbb"/></svg>
<div style="left:601px;top:419px;width:311px;height:23px;background:#262626;border-bottom:1.5px solid #1e1c1d"></div>
<div style="left:606px;top:421px;width:18px;height:17px;background:#434343;border-radius:3px;box-shadow:0 0 0 1px #2e2e2e"></div>
<svg style="position:absolute;left:606px;top:421px" width="18" height="17" viewBox="0 0 18 17"><g transform="translate(0 0)"><path d="M4.5 3 H10 L13 6 V14.5 H4.5Z" fill="none" stroke="#e0e0e0" stroke-width="1.1"/><path d="M10 3 V6 H13" fill="none" stroke="#e0e0e0" stroke-width="1"/></g></svg>
<div style="left:627px;top:421px;width:17px;height:17px;background:#434343;border-radius:3px;box-shadow:0 0 0 1px #2e2e2e"></div>
<svg style="position:absolute;left:627px;top:421px" width="17" height="17" viewBox="0 0 17 17"><g transform="translate(0 0)"><path d="M4.5 3 H10 L13 6 V14.5 H4.5Z" fill="none" stroke="#e0e0e0" stroke-width="1.1"/><path d="M10 3 V6 H13" fill="none" stroke="#e0e0e0" stroke-width="1"/><text x="8.7" y="12.8" font-size="6.5" font-family="Liberation Sans" fill="#e0e0e0" text-anchor="middle">8</text></g></svg>
<div style="left:647px;top:421px;width:17px;height:17px;background:#434343;border-radius:3px;box-shadow:0 0 0 1px #2e2e2e"></div>
<svg style="position:absolute;left:647px;top:421px" width="17" height="17" viewBox="0 0 17 17"><g transform="translate(0 0)"><path d="M4.5 3 H10 L13 6 V14.5 H4.5Z" fill="none" stroke="#e0e0e0" stroke-width="1.1"/><path d="M10 3 V6 H13" fill="none" stroke="#e0e0e0" stroke-width="1"/><text x="8.7" y="12.8" font-size="6.5" font-family="Liberation Sans" fill="#e0e0e0" text-anchor="middle">1</text></g></svg>
<div style="left:667px;top:421px;width:23px;height:17px;background:#434343;border-radius:3px;box-shadow:0 0 0 1px #2e2e2e"></div>
<svg style="position:absolute;left:667px;top:421px" width="23" height="17" viewBox="0 0 23 17"><path d="M4.5 3 H9.5 L12 5.5 V9 M8 14.5 H4.5 V3" fill="none" stroke="#e0e0e0" stroke-width="1.1"/><path d="M11 9 V15.5 M7.8 12.2 H14.2" stroke="#e0e0e0" stroke-width="1.4"/><path d="M16 7.5 H21 L18.5 10.5Z" fill="#e0e0e0"/></svg>
<div style="left:692px;top:421px;width:18px;height:17px;background:#434343;border-radius:3px;box-shadow:0 0 0 1px #2e2e2e"></div>
<svg style="position:absolute;left:692px;top:421px" width="18" height="17" viewBox="0 0 18 17"><path d="M3 5 H7.5 L8.5 6.2 H14.5 V13.5 H3Z" fill="#e0e0e0"/></svg>
<div style="left:718px;top:421px;width:18px;height:17px;background:#434343;border-radius:3px;box-shadow:0 0 0 1px #2e2e2e"></div>
<svg style="position:absolute;left:718px;top:421px" width="18" height="17" viewBox="0 0 18 17"><rect x="6" y="3.5" width="8" height="8" fill="none" stroke="#e0e0e0" stroke-width="1.1"/><rect x="3.5" y="6" width="8" height="8" fill="#3e3e3e" stroke="#e0e0e0" stroke-width="1.1"/></svg>
<div style="left:738px;top:421px;width:18px;height:17px;background:#434343;border-radius:3px;box-shadow:0 0 0 1px #2e2e2e"></div>
<svg style="position:absolute;left:738px;top:421px" width="18" height="17" viewBox="0 0 18 17"><rect x="3.5" y="3.5" width="4" height="4" fill="none" stroke="#e0e0e0"/><rect x="3.5" y="10" width="4" height="4" fill="#e0e0e0"/><rect x="10" y="6.5" width="5" height="4.5" fill="#e0e0e0"/><path d="M7.5 5.5 H9 V12 H7.5" fill="none" stroke="#e0e0e0"/></svg>
<div style="left:764px;top:421px;width:17px;height:17px;background:#434343;border-radius:3px;box-shadow:0 0 0 1px #2e2e2e"></div>
<svg style="position:absolute;left:764px;top:421px" width="17" height="17" viewBox="0 0 17 17"><path d="M3.5 5 H13.5" stroke="#e0e0e0" stroke-width="1.2"/><path d="M6.5 4.8 V3.3 H10.5 V4.8" fill="none" stroke="#e0e0e0" stroke-width="1"/><path d="M4.5 6 H12.5 V14 H4.5Z" fill="none" stroke="#e0e0e0" stroke-width="1.1"/><path d="M6.7 7.5 V12.5 M8.5 7.5 V12.5 M10.3 7.5 V12.5" stroke="#e0e0e0" stroke-width="1"/></svg>
<div style="left:714px;top:425px;width:1px;height:9px;background:#555"></div>
<div style="left:760px;top:425px;width:1px;height:9px;background:#555"></div>
</body></html>
